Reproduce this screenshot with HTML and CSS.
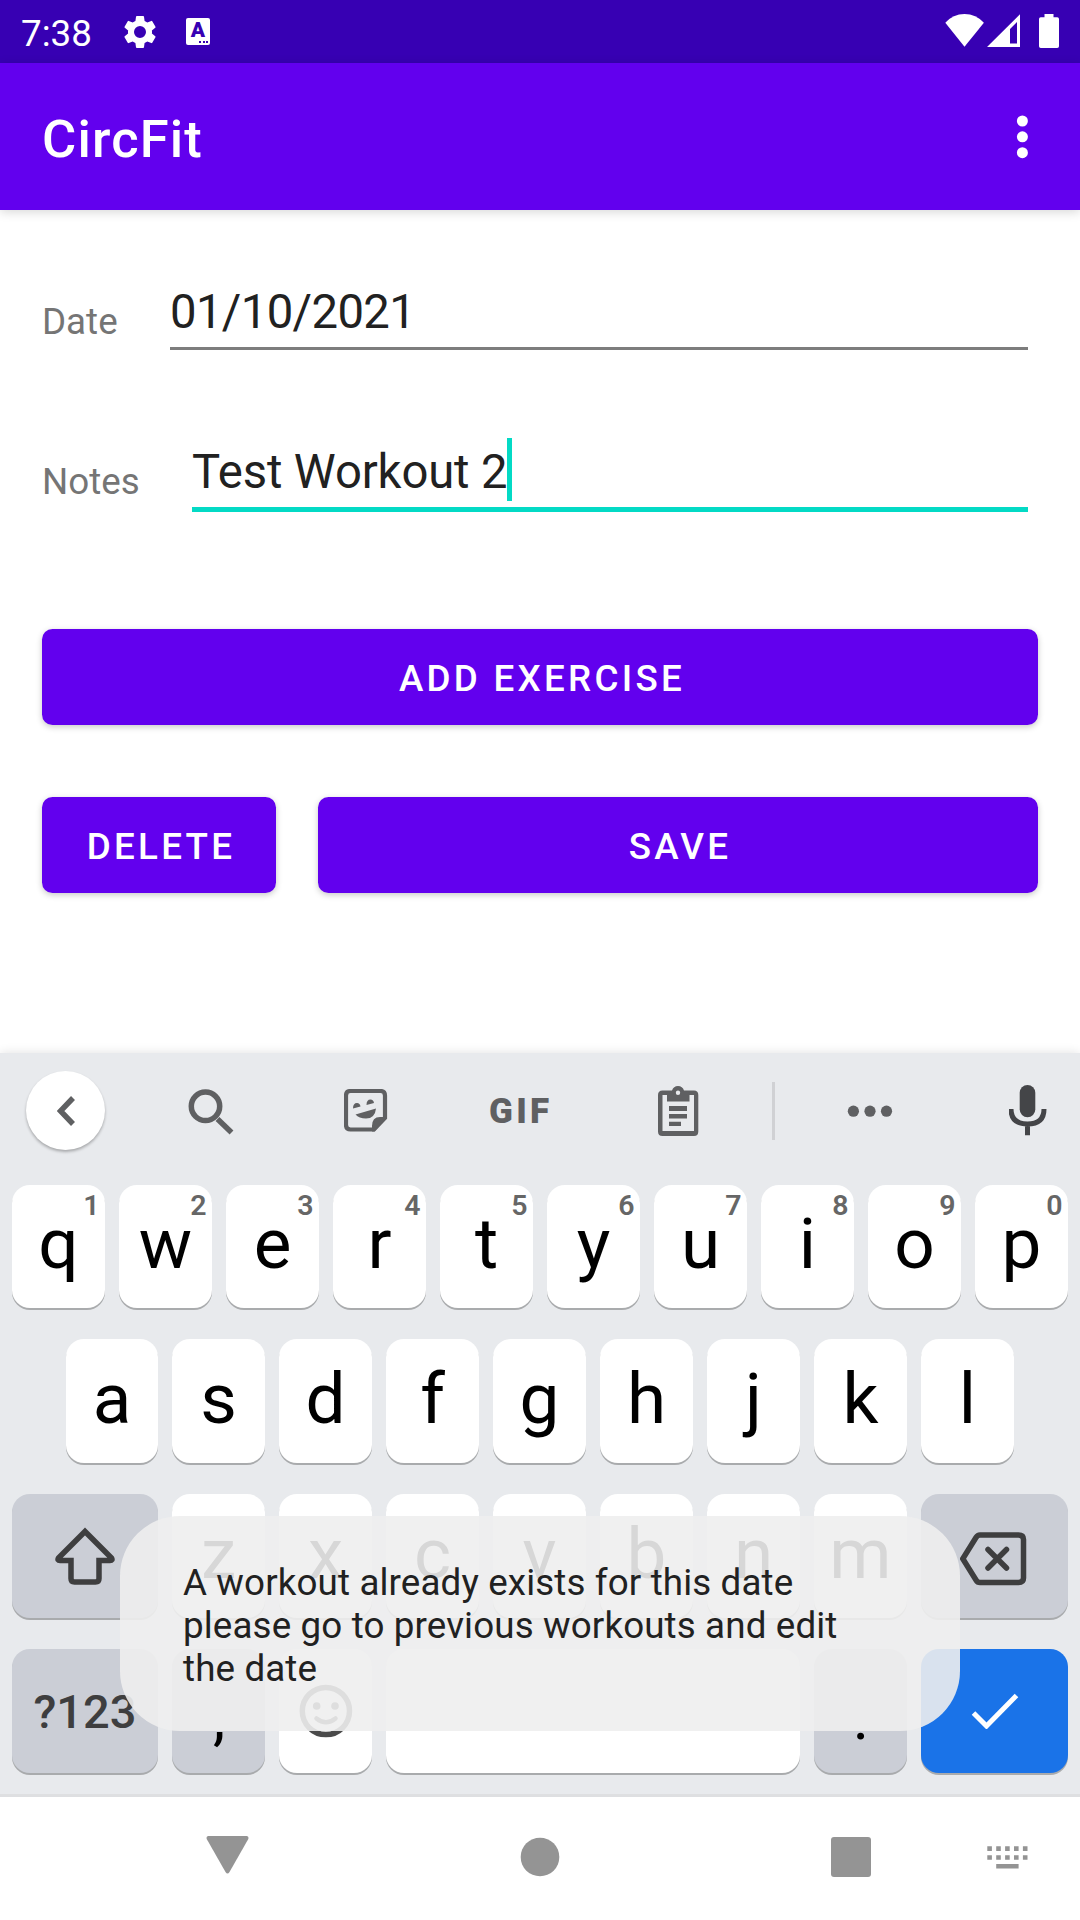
FILE: index.html
```html
<!DOCTYPE html>
<html lang="en">
<head>
<meta charset="utf-8">
<title>CircFit</title>
<link rel="stylesheet" href="styles.css">
</head>
<body>
<div class="screen">
  <header class="status">
    <span class="clock">7:38</span>
    <svg class="gear" width="40" height="40" viewBox="0 0 24 24"><path d="M19.14 12.94c.04-.3.06-.61.06-.94 0-.32-.02-.64-.07-.94l2.03-1.58a.49.49 0 0 0 .12-.61l-1.92-3.32a.49.49 0 0 0-.59-.22l-2.39.96c-.5-.38-1.03-.7-1.62-.94l-.36-2.54a.48.48 0 0 0-.48-.41h-3.84c-.24 0-.43.17-.47.41l-.36 2.54c-.59.24-1.13.57-1.62.94l-2.39-.96a.48.48 0 0 0-.59.22L2.74 8.87c-.12.21-.08.47.12.61l2.03 1.58c-.05.3-.09.63-.09.94s.02.64.07.94l-2.03 1.58a.49.49 0 0 0-.12.61l1.92 3.32c.12.22.37.29.59.22l2.39-.96c.5.38 1.03.7 1.62.94l.36 2.54c.05.24.24.41.48.41h3.84c.24 0 .44-.17.47-.41l.36-2.54c.59-.24 1.13-.56 1.62-.94l2.39.96c.22.08.47 0 .59-.22l1.92-3.32a.48.48 0 0 0-.12-.61zM12 15.6a3.6 3.6 0 1 1 0-7.2 3.6 3.6 0 0 1 0 7.2z"/></svg>
    <span class="lang"><b>A</b><i></i></span>
    <span class="grow"></span>
    <svg width="39" height="33" viewBox="945 14 39 33"><path d="M945.3 22.8Q953 14 964.500 14Q976 14 983.900 22.800L964.500 46.800Z"/></svg>
    <svg class="signal" width="33" height="33" viewBox="987 14 33 33"><path fill-rule="evenodd" d="M987 47L1020 14.300V47ZM1010 29V43.500H1017V22Z"/></svg>
    <svg class="battery" width="20" height="34" viewBox="0 0 20 34"><path d="M5.500 0h9v3.300h3.700q1.800 0 1.800 1.800v27.100q0 1.800-1.800 1.800H1.800Q0 34 0 32.200V5.100Q0 3.300 1.800 3.300h3.700z"/></svg>
  </header>
  <div class="appbar">
    <h1>CircFit</h1>
    <svg width="12" height="44" viewBox="0 0 12 44"><circle cx="6.400" cy="6" r="5.500"/><circle cx="6.400" cy="21.800" r="5.500"/><circle cx="6.400" cy="37.700" r="5.500"/></svg>
  </div>
  <main class="form">
    <div class="field date"><label>Date</label><div class="input">01/10/2021</div></div>
    <div class="field notes"><label>Notes</label><div class="input active">Test Workout 2<span class="caret"></span></div></div>
    <button class="btn add">ADD EXERCISE</button>
    <div class="actions"><button class="btn">DELETE</button><button class="btn">SAVE</button></div>
  </main>
  <section class="keyboard">
    <div class="tools">
      <span class="back"><svg width="18" height="30" viewBox="0 0 18 30"><path class="line" d="M16 2L3.500 15L16 28"/></svg></span>
      <svg class="search" width="46" height="46" viewBox="188 1089 46 46"><circle class="line" cx="205.500" cy="1106.300" r="14.200"/><path class="line" d="M217.500 1119L231.500 1132.500"/></svg>
      <svg class="sticker" width="44" height="44" viewBox="344 1089 44 44"><path class="line thin" d="M374 1129.500H350.500Q346 1129.500 346 1125V1095.500Q346 1091 350.500 1091H380.500Q385 1091 385 1095.500V1118Z"/><path d="M372 1131.500V1126Q372 1117 380 1117H387L374.500 1131.500ZM353 1108.500Q353 1103 357 1103Q360 1103 360.500 1106.500ZM366.500 1105Q366.500 1099.500 370.500 1099.500Q373.500 1099.500 374 1103ZM355.500 1114.500L376 1108.500Q375 1118.500 366 1118.500Q359 1118.500 355.500 1114.500Z"/></svg>
      <span class="gif">GIF</span>
      <svg class="clip" width="42" height="51" viewBox="657 1085 42 51"><path fill-rule="evenodd" d="M672 1090.500Q673.500 1086 678 1086T684 1090.500H694Q698.300 1090.500 698.300 1095V1131.500Q698.300 1136 694 1136H662.500Q658 1136 658 1131.500V1095Q658 1090.500 662.500 1090.500ZM662.500 1095V1131H694V1095H689.500V1101.500H667V1095ZM678 1090.500A2.200 2.200 0 1 0 678 1094.900A2.200 2.200 0 1 0 678 1090.500Z"/><path d="M669 1106h18v5h-18zM669 1114h18v4.500h-18zM669 1121.800h12v4.300h-12z"/></svg>
      <span class="sep"></span>
      <svg class="more" width="46" height="12" viewBox="847 1105 46 12"><circle cx="853.400" cy="1111.200" r="5.600"/><circle cx="870" cy="1111.200" r="5.600"/><circle cx="886.500" cy="1111.200" r="5.600"/></svg>
      <svg class="mic" width="38" height="51" viewBox="1009 1085 38 51"><rect x="1019.700" y="1085" width="15.600" height="32.300" rx="7.800"/><path class="line" d="M1011 1109Q1011 1124 1027.500 1124Q1044 1124 1044 1109M1027.500 1124V1135.300"/></svg>
    </div>
    <div class="row">
      <kbd>q<sup>1</sup></kbd><kbd>w<sup>2</sup></kbd><kbd>e<sup>3</sup></kbd><kbd>r<sup>4</sup></kbd><kbd>t<sup>5</sup></kbd><kbd>y<sup>6</sup></kbd><kbd>u<sup>7</sup></kbd><kbd>i<sup>8</sup></kbd><kbd>o<sup>9</sup></kbd><kbd>p<sup>0</sup></kbd>
    </div>
    <div class="row second">
      <kbd>a</kbd><kbd>s</kbd><kbd>d</kbd><kbd>f</kbd><kbd>g</kbd><kbd>h</kbd><kbd>j</kbd><kbd>k</kbd><kbd>l</kbd>
    </div>
    <div class="row">
      <kbd class="wide dark"><svg width="60" height="58" viewBox="55 1526 60 58"><path class="line key" d="M85 1530.500L58.500 1557Q57 1559.500 60 1559.500H71V1577.500Q71 1581 74.500 1581H95.500Q99 1581 99 1577.500V1559.500H110Q113 1559.500 111.500 1557Z"/></svg></kbd><kbd>z</kbd><kbd>x</kbd><kbd>c</kbd><kbd>v</kbd><kbd>b</kbd><kbd>n</kbd><kbd>m</kbd><kbd class="last dark erase"><svg width="67" height="54" viewBox="960 1532 67 54"><path class="line key" d="M980 1535H1018.500Q1023.500 1535 1023.500 1539.500V1578Q1023.500 1582.500 1018.500 1582.500H980Q977.500 1582.500 976 1580L962.800 1558.800L976 1537.500Q977.500 1535 980 1535ZM988 1549.500L1006.500 1568M1006.500 1549.500L988 1568"/></svg></kbd>
    </div>
    <div class="row">
      <kbd class="wide dark mode">?123</kbd><kbd class="dark punct">,</kbd><kbd><svg class="face" width="54" height="54" viewBox="298.500 1683.500 54 54"><circle class="line key" cx="325.400" cy="1710.500" r="23.600"/><circle cx="316.200" cy="1705.500" r="3.800"/><circle cx="334.500" cy="1705.500" r="3.800"/><path class="line smile" d="M316 1718Q325.400 1725.500 335 1718"/></svg></kbd><kbd class="space"></kbd><kbd class="dark punct">.</kbd><kbd class="last enter"><svg width="48" height="36" viewBox="971 1693 48 36"><path class="line" d="M973.500 1713L986.500 1726L1016.500 1695.500"/></svg></kbd>
    </div>
  </section>
  <nav class="navbar">
    <svg class="n-back" width="43" height="38" viewBox="0 0 43 38"><path d="M2 0H41Q43 .5 42.300 3L23.500 36Q21.500 39 19.500 36L.7 3Q0 .5 2 0Z"/></svg>
    <svg class="n-home" width="40" height="40" viewBox="0 0 40 40"><circle cx="20" cy="20" r="19.300"/></svg>
    <svg class="n-recent" width="40" height="40" viewBox="0 0 40 40"><rect width="40" height="40" rx="3"/></svg>
    <svg class="n-ime" width="42" height="23" viewBox="987 1846 42 23"><path d="M987.300 1846.300h4.600v4.600h-4.600zM996.200 1846.300h4.600v4.600h-4.600zM1005.100 1846.300h4.600v4.600h-4.600zM1014 1846.300h4.600v4.600h-4.600zM1022.900 1846.300h4.600v4.600h-4.600zM987.300 1855.200h4.600v4.600h-4.600zM996.200 1855.200h4.600v4.600h-4.600zM1005.100 1855.200h4.600v4.600h-4.600zM1014 1855.200h4.600v4.600h-4.600zM1022.900 1855.200h4.600v4.600h-4.600zM996.200 1864h22.400v4.600h-22.400z"/></svg>
  </nav>
  <div class="toast">A workout already exists for this date<br>please go to previous workouts and edit<br>the date</div>
</div>
</body>
</html>
```
FILE: styles.css
```css
* { box-sizing: border-box; }
body { margin: 0; font-family: Roboto, sans-serif; background: #fff; }
svg { display: block; flex: none; fill: currentColor; }
.screen { position: relative; width: 1080px; height: 1920px; display: flex; flex-direction: column; overflow: hidden; }

.status { height: 63px; background: #3700b3; color: #fff; display: flex; padding: 14px 21px 0 21px; }
.clock { font-size: 36.75px; line-height: 39px; width: 71px; }
.gear { margin: -2px 0 0 28px; }
.lang { width: 24px; height: 27px; margin: 4px 0 0 26px; background: #fff; border-radius: 2px; color: #3700b3; display: flex; flex-direction: column; align-items: center; }
.lang b { font-size: 21px; line-height: 21px; font-weight: 900; margin-top: 2px; }
.lang i { align-self: flex-end; width: 9px; height: 2px; margin-right: 2px; background: repeating-linear-gradient(90deg, #3700b3 0 2px, #fff 2px 3.500px); }
.grow { flex: 1; }
.signal { margin-left: 3px; }
.battery { margin-left: 19px; }

.appbar { height: 147px; background: #6200ee; color: #fff; display: flex; align-items: center; justify-content: space-between; padding: 0 52px 0 42px; box-shadow: 0 2px 10px rgba(0,0,0,.16); }
.appbar h1 { margin: 5px 0 0; font-size: 52.500px; font-weight: 500; line-height: 62px; letter-spacing: 1.150px; }

.form { height: 843px; padding: 68px 42px 0; }
.field { display: flex; padding-right: 10px; }
.field label { font-size: 36.750px; line-height: 43px; color: #757575; padding-top: 22px; }
.date { height: 160px; }
.date label { width: 128px; }
.date .input { letter-spacing: -.62px; }
.notes label { width: 150px; }
.notes { height: 191px; }
.input { flex: 1; height: 72px; border-bottom: 3px solid #7d7d7d; color: #212121; font-size: 47.250px; line-height: 57px; padding-top: 6px; white-space: nowrap; display: flex; align-items: flex-start; }
.input.active { height: 74px; border-bottom: 5px solid #03dac5; letter-spacing: -.14px; }
.caret { width: 5px; height: 63px; margin-top: -6px; background: #03dac5; }
.btn { display: block; height: 96px; border: 0; border-radius: 10.500px; padding: 2px 0 0 4px; background: #6200ee; color: #fff; font: 500 36.750px Roboto, sans-serif; letter-spacing: 3.280px; box-shadow: 0 2px 6px rgba(0,0,0,.22); }
.add { width: 996px; }
.actions { margin-top: 72px; display: grid; grid-template-columns: 234px 720px; gap: 42px; }

.keyboard { position: relative; height: 744px; background: #e8eaed; border-bottom: 3px solid #dedfe1; box-shadow: 0 0 10px rgba(0,0,0,.12); color: #5f6062; }
.tools { height: 132px; padding-left: 26px; display: flex; align-items: flex-start; }
.line { fill: none; stroke: currentColor; stroke-width: 5; }
.thin { stroke-width: 4.200; }
.back { width: 79px; height: 79px; margin-top: 18px; border-radius: 50%; background: #fff; box-shadow: 0 2px 3px rgba(0,0,0,.28); display: grid; place-items: center; }
.search { margin: 36px 0 0 83px; }
.search .line, .back .line { stroke-width: 5.500; }
.sticker { margin: 36px 0 0 110px; }
.gif { margin: 38px 0 0 101px; width: 63px; font-size: 35px; line-height: 41px; font-weight: 900; letter-spacing: 3.300px; }
.clip { margin: 32px 0 0 105px; }
.sep { width: 3px; height: 58px; margin: 29px 0 0 73px; background: #d0d1d4; }
.more { margin: 52px 0 0 72px; }
.mic { margin: 32px 0 0 116px; color: #444548; }

.row { display: flex; gap: 14px; padding: 0 12px; height: 124px; margin-bottom: 31px; }
.tools + .row { height: 123px; }
.second { padding: 0 66px; }
.second kbd:first-child { width: 92px; }
kbd { position: relative; flex: none; width: 93px; border-radius: 18px; background: #fff; box-shadow: 0 2px 0 #a9abad; color: #000; font: 71px/83px Roboto, sans-serif; display: flex; align-items: center; justify-content: center; padding-bottom: 6px; }
kbd svg { margin-bottom: -6px; }
kbd sup { position: absolute; top: 4px; right: 5.500px; font-size: 28.500px; line-height: 34px; font-weight: 600; color: #666; }
.dark { background: #cbced6; }
.wide { width: 146px; }
.last { width: 147px; }
.wide, .last { color: #3e3e3f; }
.key { stroke-width: 5.500; stroke-linecap: round; }
.smile { stroke-width: 4.500; stroke-linecap: round; }
.face { color: #4a4a4a; }
.mode { font-size: 47px; font-weight: 500; padding: 0; }
.punct { font-size: 62px; padding: 13px 0 0 1px; }
.space { width: 414px; }
.erase { padding: 0 2px 0 0; }
.erase svg { margin-bottom: -5px; }
.enter { background: #1a73e8; color: #fff; padding-left: 0; }

.navbar { height: 123px; background: #fff; color: #949494; display: flex; position: relative; }
.n-back { margin: 39px 0 0 206px; }
.n-home { margin: 40px 0 0 271px; }
.n-recent { margin: 40px 0 0 271px; }
.n-ime { margin: 49px 0 0 116px; }

.toast { position: absolute; left: 120px; top: 1516px; width: 840px; height: 215px; border-radius: 60px; background: rgba(238,238,238,.9); color: #212121; font-size: 36.750px; line-height: 43px; letter-spacing: .13px; padding: 45px 0 0 63px; white-space: nowrap; }
```
